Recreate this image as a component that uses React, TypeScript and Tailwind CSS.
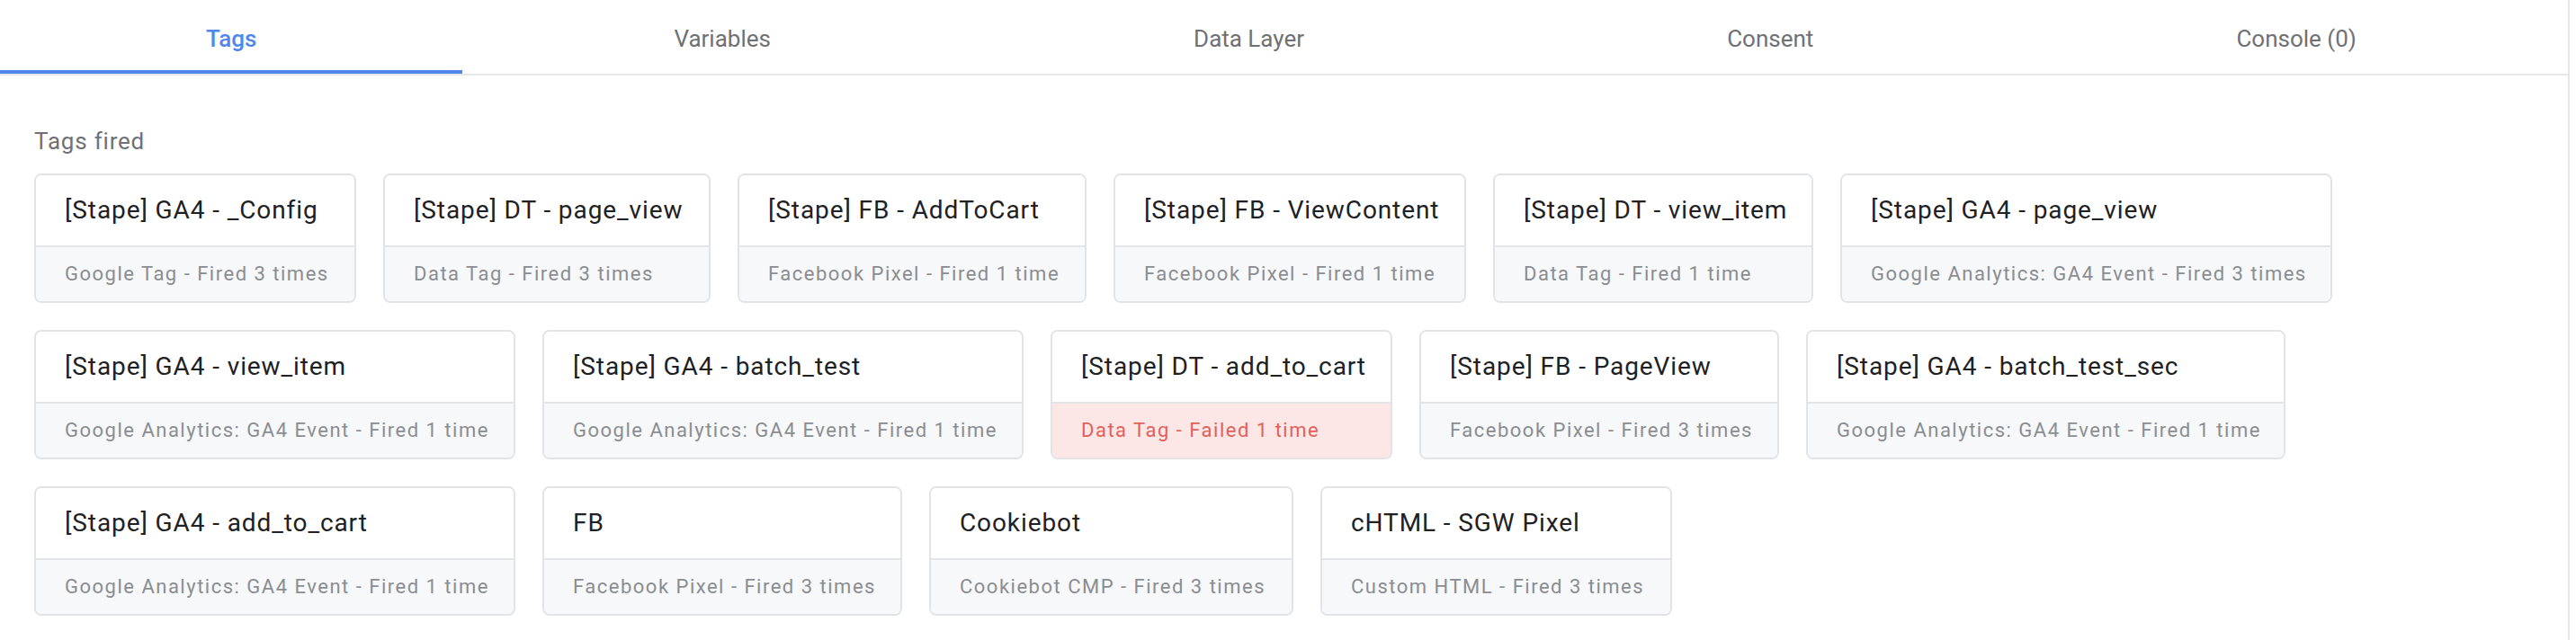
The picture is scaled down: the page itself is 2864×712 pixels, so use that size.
import React from 'react';

type Tag = {
  name: string;
  detail: string;
  width: string;
  failed?: boolean;
};

const tabs = ['Tags', 'Variables', 'Data Layer', 'Consent', 'Console (0)'];

// widths taken from the tag summary cards, rows wrap on their own
const tags: Tag[] = [
  { name: '[Stape] GA4 - _Config', detail: 'Google Tag - Fired 3 times', width: 'w-[358px]' },
  { name: '[Stape] DT - page_view', detail: 'Data Tag - Fired 3 times', width: 'w-[364px]' },
  { name: '[Stape] FB - AddToCart', detail: 'Facebook Pixel - Fired 1 time', width: 'w-[388px]' },
  { name: '[Stape] FB - ViewContent', detail: 'Facebook Pixel - Fired 1 time', width: 'w-[392px]' },
  { name: '[Stape] DT - view_item', detail: 'Data Tag - Fired 1 time', width: 'w-[356px]' },
  { name: '[Stape] GA4 - page_view', detail: 'Google Analytics: GA4 Event - Fired 3 times', width: 'w-[547px]' },
  { name: '[Stape] GA4 - view_item', detail: 'Google Analytics: GA4 Event - Fired 1 time', width: 'w-[535px]' },
  { name: '[Stape] GA4 - batch_test', detail: 'Google Analytics: GA4 Event - Fired 1 time', width: 'w-[535px]' },
  { name: '[Stape] DT - add_to_cart', detail: 'Data Tag - Failed 1 time', width: 'w-[380px]', failed: true },
  { name: '[Stape] FB - PageView', detail: 'Facebook Pixel - Fired 3 times', width: 'w-[400px]' },
  { name: '[Stape] GA4 - batch_test_sec', detail: 'Google Analytics: GA4 Event - Fired 1 time', width: 'w-[533px]' },
  { name: '[Stape] GA4 - add_to_cart', detail: 'Google Analytics: GA4 Event - Fired 1 time', width: 'w-[535px]' },
  { name: 'FB', detail: 'Facebook Pixel - Fired 3 times', width: 'w-[400px]' },
  { name: 'Cookiebot', detail: 'Cookiebot CMP - Fired 3 times', width: 'w-[405px]' },
  { name: 'cHTML - SGW Pixel', detail: 'Custom HTML - Fired 3 times', width: 'w-[391px]' },
];

function TagCard({ tag }: { tag: Tag }) {
  return (
    <div className={`${tag.width} flex flex-col rounded-[8px] border-2 border-[#e1e3e6] overflow-hidden`}>
      {/* Tag name */}
      <div className="h-[78px] flex items-center px-[32px] bg-white">
        <span className="text-[28px] leading-[34px] tracking-[0.9px] text-[#202124] whitespace-nowrap">
          {tag.name}
        </span>
      </div>
      {/* Type + fire count */}
      <div
        className={`h-[62px] flex items-center px-[32px] border-t-2 border-[#e3e5e8] ${
          tag.failed ? 'bg-[#fce7e6]' : 'bg-[#f7f8fa]'
        }`}
      >
        <span
          className={`text-[22px] leading-[28px] tracking-[1.5px] whitespace-nowrap ${
            tag.failed ? 'text-[#e2605a]' : 'text-[#8a8d91]'
          }`}
        >
          {tag.detail}
        </span>
      </div>
    </div>
  );
}

export default function App() {
  const activeTab = 'Tags';

  return (
    <div className="w-[2857px] min-h-[712px] bg-white border-r-2 border-[#e4e4e4] font-[family-name:Roboto,sans-serif]">
      {/* Tabs */}
      <div className="flex border-b-2 border-[#e6e7e9]">
        {tabs.map(tab => (
          <button
            key={tab}
            className={`flex-auto h-[82px] pt-[8px] flex items-center justify-center border-b-4 text-[26px] ${
              tab === activeTab
                ? 'px-[18px] border-[#4f87ec] text-[#4f87ec] font-medium'
                : 'px-[24px] border-transparent text-[#6f7175]'
            }`}
          >
            {tab}
          </button>
        ))}
      </div>

      {/* Tags fired */}
      <div className="pl-[38px] pr-[36px] pt-[58px]">
        <h2 className="text-[26px] leading-[30px] tracking-[0.8px] text-[#6f7175] mb-[21px]">Tags fired</h2>
        <div className="flex flex-wrap gap-[30px]">
          {tags.map(tag => (
            <TagCard key={tag.name} tag={tag} />
          ))}
        </div>
      </div>
    </div>
  );
}
